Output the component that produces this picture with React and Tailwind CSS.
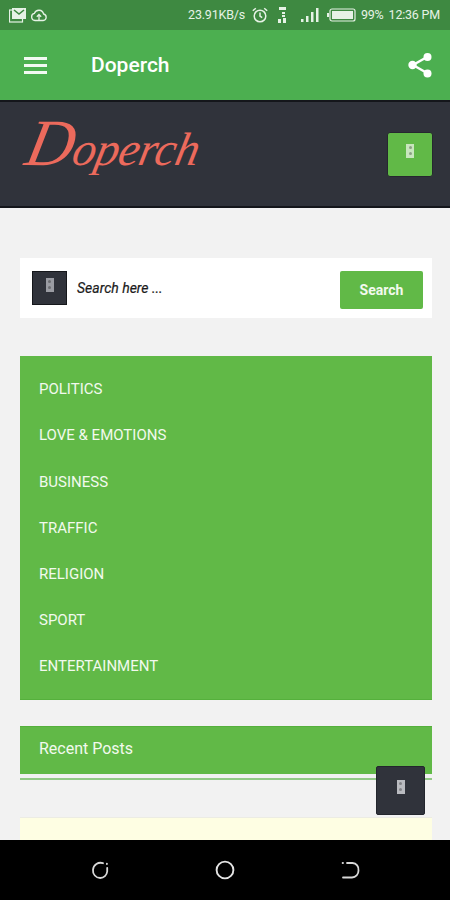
const categories = ['POLITICS', 'LOVE & EMOTIONS', 'BUSINESS', 'TRAFFIC', 'RELIGION', 'SPORT', 'ENTERTAINMENT']

// the blank box the page shows where its icon font failed to load
function MissingGlyph({ className }) {
  return (
    <span className={`flex flex-col items-center justify-center gap-[3px] w-[8px] h-[14px] ${className}`}>
      <span className="w-[3px] h-[3px] rounded-full bg-black/30" />
      <span className="w-[3px] h-[3px] rounded-full bg-black/30" />
    </span>
  )
}

function StatusBar() {
  return (
    <div className="h-[30px] shrink-0 flex items-center justify-between pl-[9px] pr-[10px] bg-[#3e8941] text-[#e6f2e6]">
      <div className="flex items-center gap-[3px]">
        <svg width="18" height="16" viewBox="0 0 18 16">
          <rect x="0.5" y="3" width="13" height="12" fill="none" stroke="currentColor" strokeWidth="1.2" />
          <rect x="3" y="1" width="14" height="11" fill="currentColor" />
          <path d="M5 3l5 4 5-4" fill="none" stroke="#3e8941" strokeWidth="1.6" />
        </svg>
        <svg width="18" height="16" viewBox="0 0 18 16" fill="none" stroke="currentColor" strokeWidth="1.3">
          <path d="M5 13.5a3.6 3.6 0 0 1-.6-7.1 4.8 4.8 0 0 1 9.2.6 3.3 3.3 0 0 1-.4 6.5z" />
          <path d="M9 13V7.5M6.8 9.7L9 7.5l2.2 2.2" />
        </svg>
      </div>
      <div className="flex items-center text-[12.5px] leading-none font-['Roboto',sans-serif] tracking-[-0.2px]">
        <span className="mr-[6px]">23.91KB/s</span>
        <svg width="18" height="18" viewBox="0 0 18 18" fill="none" stroke="currentColor" strokeWidth="1.5" className="mr-[7px]">
          <circle cx="9" cy="10" r="5.8" />
          <path d="M9 6.5V10l2.2 1.6M1.8 4.8l3-2.6M16.2 4.8l-3-2.6" />
        </svg>
        <svg width="12" height="18" viewBox="0 0 10 18" fill="currentColor" className="mr-[12px]">
          <rect x="2" y="1" width="7" height="3" />
          <rect x="5" y="6" width="3" height="2" />
          <rect x="5" y="9" width="3" height="2" />
          <rect x="1" y="13" width="3" height="4" />
          <rect x="6" y="12" width="3" height="5" />
        </svg>
        <svg width="20" height="16" viewBox="0 0 20 16" fill="currentColor" className="mr-[7px]">
          <rect x="1" y="12" width="2.5" height="3" />
          <rect x="6" y="9" width="2.5" height="6" />
          <rect x="11" y="5" width="2.5" height="10" />
          <rect x="16" y="1" width="2.5" height="14" />
        </svg>
        <svg width="29" height="14" viewBox="0 0 29 14" className="mr-[5px]">
          <rect x="0" y="5" width="2" height="4" fill="currentColor" />
          <rect x="3" y="1" width="25" height="12" rx="2" fill="none" stroke="currentColor" strokeWidth="1.2" />
          <rect x="5" y="3" width="21" height="8" fill="currentColor" />
        </svg>
        <span className="mr-[5px]">99%</span>
        <span>12:36 PM</span>
      </div>
    </div>
  )
}

function AppBar() {
  return (
    <div className="h-[70px] shrink-0 flex items-center justify-between pl-[24px] pr-[17px] bg-[#4caf50] text-white">
      <div className="flex items-center">
        <div className="flex flex-col gap-[4px] w-[23px]">
          <span className="h-[3px] bg-[#f2f9f2]" />
          <span className="h-[3px] bg-[#f2f9f2]" />
          <span className="h-[3px] bg-[#f2f9f2]" />
        </div>
        <span className="ml-[44px] mt-[2px] text-[21px] font-medium font-['Roboto',sans-serif]">Doperch</span>
      </div>
      <svg width="26" height="28" viewBox="0 0 26 28" fill="#ffffff" stroke="#ffffff">
        <path d="M20 6L6 14l14 8" fill="none" strokeWidth="2.4" />
        <circle cx="20.5" cy="6" r="4" strokeWidth="0" />
        <circle cx="5.5" cy="14" r="4.2" strokeWidth="0" />
        <circle cx="20.5" cy="22.5" r="4" strokeWidth="0" />
      </svg>
    </div>
  )
}

function Header() {
  return (
    <div className="h-[108px] shrink-0 flex items-start justify-between pl-[27px] pr-[17px] bg-[#30333b] border-y-2 border-[#14161b]">
      <span className="mt-[6px] text-[#ec6a5c] text-[47px] leading-[70px] italic font-['Liberation_Serif',serif] -skew-x-12 tracking-[-0.5px]">
        <span className="text-[66px]">D</span>operch
      </span>
      <div className="mt-[30px] w-[46px] h-[45px] rounded-[3px] bg-[#61b947] border border-[#26282f] flex items-center justify-center pb-[8px]">
        <MissingGlyph className="bg-[#c8e6bd]" />
      </div>
    </div>
  )
}

function SearchCard() {
  return (
    <div className="mt-[50px] ml-[20px] mr-[18px] h-[60px] shrink-0 flex items-center justify-between pl-[12px] pr-[9px] bg-white">
      <div className="flex items-center">
        <div className="w-[35px] h-[34px] bg-[#30333b] border border-[#15171b] flex items-center justify-center pb-[7px]">
          <MissingGlyph className="bg-[#9a9ca3]" />
        </div>
        <span className="ml-[10px] text-[14px] italic text-[#1c1c1c] [-webkit-text-stroke:0.2px_#1c1c1c] font-['Roboto',sans-serif]">Search here ...</span>
      </div>
      <div className="mt-[4px] w-[83px] h-[38px] rounded-[2px] bg-[#61b947] flex items-center justify-center text-[14px] font-bold text-[#f2f9ee] font-['Roboto',sans-serif]">
        Search
      </div>
    </div>
  )
}

function CategoryMenu() {
  return (
    <div className="mt-[38px] ml-[20px] mr-[18px] h-[344px] shrink-0 flex flex-col justify-center pt-[1px] pl-[19px] bg-[#61b947] border-b border-[#55b03c]">
      {categories.map((name) => (
        <div key={name} className="h-[46.17px] flex items-center text-[15px] text-[#f2f9ee] font-['Roboto',sans-serif]">
          {name}
        </div>
      ))}
    </div>
  )
}

function RecentPosts() {
  return (
    <div className="mt-[26px] ml-[20px] mr-[18px] shrink-0">
      <div className="h-[48px] flex items-center pl-[19px] pb-[4px] bg-[#61b947] border-t border-[#55b03c] text-[16px] text-[#f2f9ee] font-['Roboto',sans-serif]">
        Recent Posts
      </div>
      <div className="mt-[4px] h-[2px] bg-[#92c986]" />
    </div>
  )
}

function NavBar() {
  return (
    <div className="h-[60px] shrink-0 flex items-center justify-between px-[90px] bg-black">
      <svg width="20" height="20" viewBox="0 0 20 20" fill="none" stroke="#d8d8d8" strokeWidth="1.8" strokeLinecap="round">
        <path d="M13 3.2A7.6 7.6 0 0 0 3 9.8 7.4 7.4 0 0 0 10.2 18a7.2 7.2 0 0 0 7-6.5V7.8" />
        <path d="M16.9 3.6v.4" />
      </svg>
      <svg width="20" height="20" viewBox="0 0 20 20" fill="none" stroke="#e4e4e4" strokeWidth="1.9">
        <circle cx="10" cy="10" r="8.4" />
      </svg>
      <svg width="20" height="20" viewBox="0 0 20 20" fill="none" stroke="#d8d8d8" strokeWidth="1.8" strokeLinecap="round">
        <path d="M7 3h5.5a6.5 6.5 0 0 1 6 7.5 6.8 6.8 0 0 1-6.5 7H3" />
        <path d="M2.6 3h.4" />
      </svg>
    </div>
  )
}

export default function App() {
  return (
    <div className="relative w-[450px] h-[900px] flex flex-col overflow-hidden bg-[#f2f2f2] font-['Roboto',sans-serif]">
      <StatusBar />
      <AppBar />
      <Header />
      <SearchCard />
      <CategoryMenu />
      <RecentPosts />
      <div className="mt-[37px] ml-[20px] mr-[18px] flex-1 bg-[#fefee3] border-t border-[#ecece4]" />
      <NavBar />
      <div className="absolute left-[376px] top-[766px] w-[49px] h-[49px] rounded-[2px] bg-[#30333b] border border-[#23262d] flex items-center justify-center pb-[8px]">
        <MissingGlyph className="bg-[#b9bbc0]" />
      </div>
    </div>
  )
}
